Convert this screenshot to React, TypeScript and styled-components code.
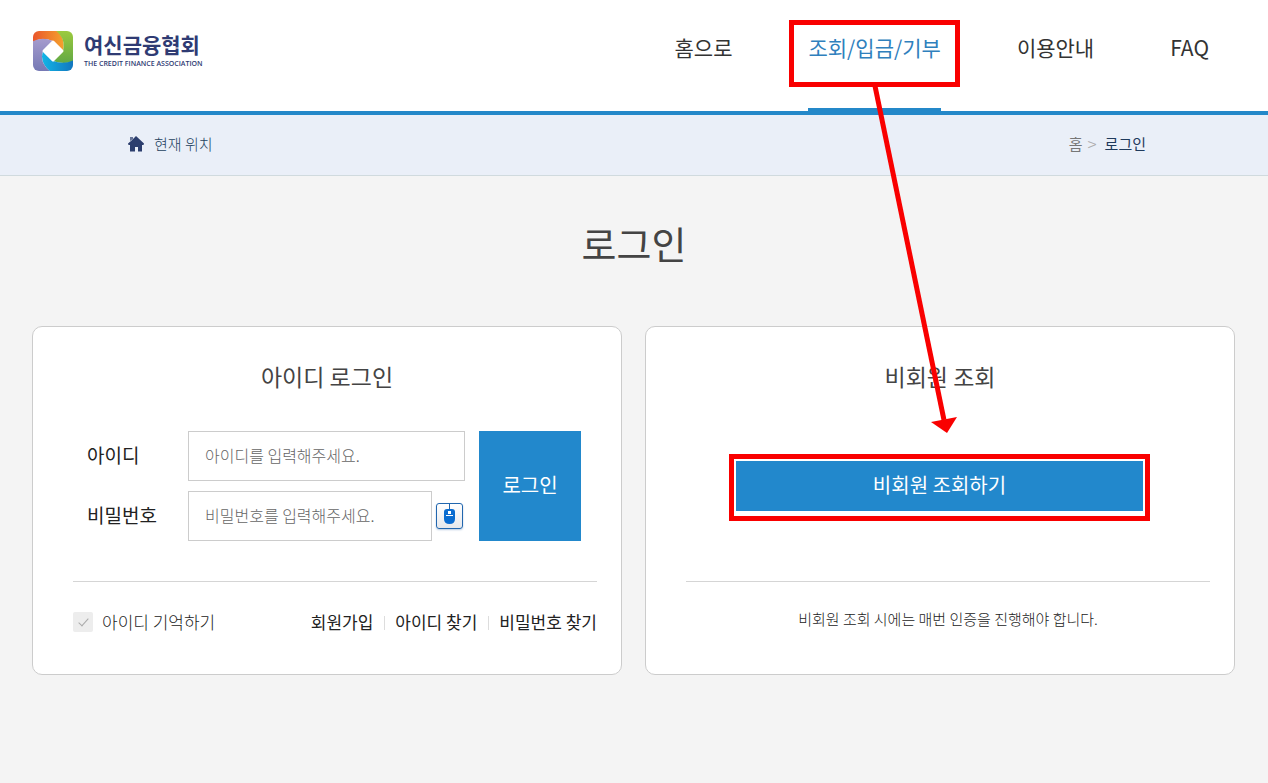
import React from "react";
import styled, { createGlobalStyle } from "styled-components";

const GlobalStyle = createGlobalStyle`
  *, *::before, *::after { box-sizing: border-box; }
  body {
    margin: 0;
    background: #f4f4f4;
    color: #222;
    font-family: "Noto Sans CJK KR", "Noto Sans", sans-serif;
    overflow-x: hidden;
  }
  a { color: inherit; text-decoration: none; }
  button, input { font-family: inherit; }
  h1, h2, p { margin: 0; font-weight: 400; }
`;

const Header = styled.header`
  display: flex;
  justify-content: space-between;
  height: 115px;
  padding: 0 59px 0 32px;
  background: #fff;
  border-bottom: 4px solid #2488c9;
`;

const Logo = styled.a`
  display: flex;
  align-items: flex-start;
  gap: 10px;
  padding-top: 30px;
`;

const LogoText = styled.span`
  display: flex;
  flex-direction: column;
  color: #2f3b73;
  white-space: nowrap;
`;

const LogoName = styled.strong`
  font-size: 21px;
  line-height: 29px;
`;

const LogoSub = styled.span`
  font-family: "Open Sans", sans-serif;
  font-size: 7px;
  font-weight: 600;
  line-height: 9px;
`;

const Nav = styled.nav`
  display: flex;
  gap: 76px;
`;

const NavItem = styled.div`
  position: relative;
  display: flex;
`;

const NavLink = styled.a<{ $active?: boolean }>`
  padding-top: 32px;
  font-size: 21px;
  line-height: 30px;
  white-space: nowrap;
  color: ${(p) => (p.$active ? "#2f80bd" : "#333")};
  border-bottom: 3px solid ${(p) => (p.$active ? "#2488c9" : "transparent")};
`;

const NavMark = styled.span`
  position: absolute;
  z-index: 2;
  top: 20px;
  left: -19px;
  right: -19px;
  height: 67px;
  border: 5px solid #f90000;
  pointer-events: none;
`;

const Arrow = styled.svg`
  position: absolute;
  z-index: 3;
  top: 84px;
  left: 60px;
  pointer-events: none;
`;

const LocationBar = styled.div`
  display: flex;
  justify-content: space-between;
  align-items: center;
  height: 61px;
  padding: 0 122px 2px 128px;
  background: #eaeff8;
  border-bottom: 1px solid #d0dade;
  font-size: 15px;
  line-height: 24px;
`;

const Here = styled.span`
  display: flex;
  align-items: center;
  gap: 10px;
  font-weight: 300;
  color: #24425f;
`;

const Crumbs = styled.nav`
  display: flex;
  gap: 5px;
  color: #777;
`;

const CrumbArrow = styled.span`
  color: #aaa;
  font-size: 17px;
  font-weight: 300;
`;

const CrumbCurrent = styled.span`
  padding-left: 3px;
  color: #1f3a5c;
`;

const Title = styled.h1`
  padding: 39px 0 55px;
  font-size: 38px;
  line-height: 56px;
  text-align: center;
  color: #444;
`;

const Cards = styled.main`
  display: grid;
  grid-template-columns: 1fr 1fr;
  gap: 23px;
  padding: 0 33px 40px 32px;
`;

const Card = styled.section`
  display: flex;
  flex-direction: column;
  min-height: 349px;
  background: #fff;
  border: 1px solid #ccc;
  border-radius: 10px;
`;

const CardTitle = styled.h2`
  padding: 31px 0 1px;
  font-size: 23px;
  line-height: 36px;
  text-align: center;
  color: #444;
`;

const LoginForm = styled.form`
  display: flex;
  gap: 14px;
  margin-top: 36px;
  padding: 0 40px 0 54px;
`;

const Fields = styled.div`
  display: flex;
  flex: 1;
  flex-direction: column;
  gap: 10px;
`;

const Field = styled.div`
  display: flex;
  align-items: center;
  height: 50px;
`;

const FieldLabel = styled.label`
  flex: 0 0 101px;
  padding-bottom: 2px;
  font-size: 19px;
  line-height: 28px;
`;

const TextInput = styled.input`
  flex: 1;
  min-width: 0;
  height: 50px;
  padding: 0 16px 2px;
  font-size: 16px;
  font-weight: 300;
  background: #fff;
  border: 1px solid #ccc;
  border-radius: 0;
  &::placeholder { color: #666; }
`;

const MouseButton = styled.button`
  flex: none;
  display: block;
  width: 27px;
  height: 26px;
  margin: 0 2px 0 4px;
  padding: 0;
  background: linear-gradient(#fff, #e6e8ec);
  border: 1px solid #2166ae;
  border-radius: 3px;
  box-shadow: 0 1px 2px #b9cbe0;
  svg { display: block; }
`;

const PrimaryButton = styled.button`
  border: 0;
  border-radius: 0;
  padding: 0 0 2px;
  background: #2288cc;
  color: #fff;
  font-size: 20px;
  line-height: 28px;
`;

const LoginButton = styled(PrimaryButton)`
  width: 102px;
`;

const GuestAction = styled.div`
  position: relative;
  display: flex;
  margin: 66px 91px 0 90px;
`;

const GuestButton = styled(PrimaryButton)`
  flex: 1;
  height: 50px;
`;

const GuestMark = styled.span`
  position: absolute;
  inset: -7px -7px -10px;
  border: 5px solid #f90000;
  pointer-events: none;
`;

const CardFooter = styled.div<{ $centered?: boolean }>`
  display: flex;
  justify-content: ${(p) => (p.$centered ? "center" : "space-between")};
  align-items: center;
  height: 93px;
  margin: auto 24px 0 40px;
  padding-bottom: 12px;
  border-top: 1px solid #d5d5d5;
  font-size: 17px;
  line-height: 24px;
`;

const Remember = styled.label`
  display: flex;
  align-items: center;
  gap: 9px;
  font-weight: 300;
`;

const Tick = styled.input`
  position: relative;
  appearance: none;
  width: 20px;
  height: 20px;
  margin: 0;
  background: #ededed;
  border-radius: 2px;
  &::after {
    content: "";
    position: absolute;
    left: 8px;
    top: 4px;
    width: 5px;
    height: 10px;
    border: solid #aaa;
    border-width: 0 1px 1px 0;
    transform: rotate(42deg);
  }
  &:checked::after { border-color: #2288cc; }
`;

const Links = styled.div`
  display: flex;
  align-items: center;
`;

const FootLink = styled.a`
  white-space: nowrap;
  & + & { display: flex; align-items: center; }
  & + &::before {
    content: "";
    width: 1px;
    height: 14px;
    margin: 2px 10px 0 11px;
    background: #ddd;
  }
`;

const Note = styled.p`
  padding-bottom: 6px;
  font-size: 15px;
  font-weight: 300;
  color: #222;
`;

const LogoMark = () => (
  <svg width="42" height="42" viewBox="0 0 42 42" aria-hidden="true">
    <defs>
      <clipPath id="mark"><rect x="1" y="1" width="40" height="40" rx="6" /></clipPath>
      <linearGradient id="or" x1="0" y1="0" x2="1" y2="0">
        <stop offset="0" stopColor="#e9542c" /><stop offset="1" stopColor="#f5a12d" />
      </linearGradient>
      <linearGradient id="gr" x1="0" y1="0" x2="0" y2="1">
        <stop offset="0" stopColor="#9ecb3e" /><stop offset="1" stopColor="#62a944" />
      </linearGradient>
      <linearGradient id="bl" x1="0" y1="0" x2="1" y2="0">
        <stop offset="0" stopColor="#12b5e6" /><stop offset="1" stopColor="#1274bd" />
      </linearGradient>
      <linearGradient id="pu" x1="0" y1="0" x2="0" y2="1">
        <stop offset="0" stopColor="#a59bcd" /><stop offset="1" stopColor="#7478b4" />
      </linearGradient>
    </defs>
    <g clipPath="url(#mark)">
      <path d="M0 0H24Q34 8 31 21L21 11Q9 6 0 13Z" fill="url(#or)" />
      <path d="M23 0H42V31Q32 35 21 31L31 21Q34 8 23 0Z" fill="url(#gr)" />
      <path d="M42 30V42H19Q7 33 11 21L21 31Q32 35 42 30Z" fill="url(#bl)" />
      <path d="M0 12Q9 6 21 11L11 21Q7 33 19 42H0Z" fill="url(#pu)" />
      <path d="M21 12L30 21L21 30L12 21Z" fill="#fff" stroke="#fff" strokeWidth="3" strokeLinejoin="round" />
    </g>
  </svg>
);

const HomeIcon = () => (
  <svg width="16" height="16" viewBox="0 0 16 16" fill="#2c3e6e" aria-hidden="true">
    <path d="M8 0L16 7.500L15.500 9H14V15.500H10V11H7V15.500H2V9H0.500L0 7.500L3 5Z" />
    <path d="M2 1H5V3L2 5Z" opacity="0.7" />
  </svg>
);

const MouseIcon = () => (
  <svg width="25" height="24" viewBox="0 0 25 24" aria-hidden="true">
    <path d="M12.500 0V6" stroke="#2166ae" strokeWidth="1" />
    <path d="M7 8Q7 5 10 5H15Q18 5 18 8V15Q18 20 12.500 20Q7 20 7 15Z" fill="#0a6cd0" />
    <path d="M11 7H14V10H11ZM9 11H16V12H9Z" fill="#fff" />
  </svg>
);

export default function App() {
  return (
    <>
      <GlobalStyle />
      <Header>
        <Logo href="#">
          <LogoMark />
          <LogoText>
            <LogoName>여신금융협회</LogoName>
            <LogoSub>THE CREDIT FINANCE ASSOCIATION</LogoSub>
          </LogoText>
        </Logo>
        <Nav>
          <NavItem><NavLink href="#">홈으로</NavLink></NavItem>
          <NavItem>
            <NavLink href="#" $active>조회/입금/기부</NavLink>
            <NavMark />
            <Arrow width="92" height="352" viewBox="0 0 92 352" aria-hidden="true">
              <path d="M7 2L76 336" stroke="#f90000" strokeWidth="5" />
              <path d="M63 338L89 333L79 349Z" fill="#f90000" />
            </Arrow>
          </NavItem>
          <NavItem><NavLink href="#">이용안내</NavLink></NavItem>
          <NavItem><NavLink href="#">FAQ</NavLink></NavItem>
        </Nav>
      </Header>
      <LocationBar>
        <Here><HomeIcon />현재 위치</Here>
        <Crumbs>
          <a href="#">홈</a>
          <CrumbArrow>&gt;</CrumbArrow>
          <CrumbCurrent>로그인</CrumbCurrent>
        </Crumbs>
      </LocationBar>
      <Title>로그인</Title>
      <Cards>
        <Card>
          <CardTitle>아이디 로그인</CardTitle>
          <LoginForm onSubmit={(e) => e.preventDefault()}>
            <Fields>
              <Field>
                <FieldLabel htmlFor="uid">아이디</FieldLabel>
                <TextInput id="uid" type="text" placeholder="아이디를 입력해주세요." />
              </Field>
              <Field>
                <FieldLabel htmlFor="upw">비밀번호</FieldLabel>
                <TextInput id="upw" type="password" placeholder="비밀번호를 입력해주세요." />
                <MouseButton type="button" aria-label="마우스 입력"><MouseIcon /></MouseButton>
              </Field>
            </Fields>
            <LoginButton type="submit">로그인</LoginButton>
          </LoginForm>
          <CardFooter>
            <Remember><Tick type="checkbox" />아이디 기억하기</Remember>
            <Links>
              <FootLink href="#">회원가입</FootLink>
              <FootLink href="#">아이디 찾기</FootLink>
              <FootLink href="#">비밀번호 찾기</FootLink>
            </Links>
          </CardFooter>
        </Card>
        <Card>
          <CardTitle>비회원 조회</CardTitle>
          <GuestAction>
            <GuestButton type="button">비회원 조회하기</GuestButton>
            <GuestMark />
          </GuestAction>
          <CardFooter $centered>
            <Note>비회원 조회 시에는 매번 인증을 진행해야 합니다.</Note>
          </CardFooter>
        </Card>
      </Cards>
    </>
  );
}
